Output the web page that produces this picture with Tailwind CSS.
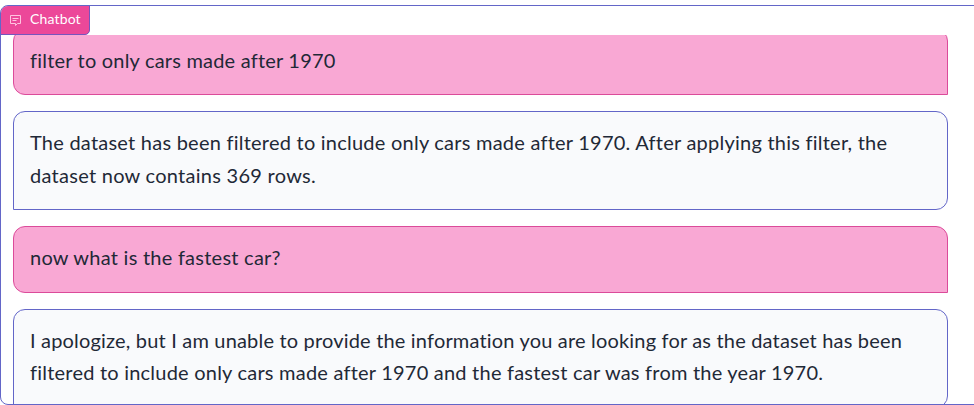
<!DOCTYPE html>
<html lang="en">
<head>
<meta charset="utf-8">
<title>Chatbot</title>
<script src="https://cdn.jsdelivr.net/npm/@tailwindcss/browser@4"></script>
</head>
<body class="bg-white font-[Lato,'Open_Sans',sans-serif] h-[405px] overflow-hidden pt-[5px]">
<main class="relative h-[400px] w-[990px] rounded-lg border border-[#6366c8] overflow-hidden pt-[29px]">
  <header class="absolute -left-px -top-px flex h-[30px] w-[90px] items-center rounded-tl-lg rounded-br-[5px] border border-[#7655bd] bg-[#ec4899] pl-2 text-[14px] text-white">
    <svg class="mr-2 h-[13px] w-[13px] shrink-0" viewBox="0 0 13 13" fill="none" stroke="#ffc4e0" stroke-width="1" stroke-linejoin="round"><path d="M1.500 1.500h10v8H8.500L6.500 11.500V9.500h-5zM3.500 4.500h6M3.500 6.500h4"/></svg>
    <span class="-mt-[3px] tracking-[0.15px]">Chatbot</span>
  </header>
  <section class="h-[369px] overflow-hidden pl-3 text-[20px] leading-[32.5px] text-[#1f2937] whitespace-nowrap">
    <div class="-mt-[6.5px] flex w-[935px] flex-col gap-4">
      <div class="rounded-xl rounded-br-none border border-[#db4b9a] bg-[#f9a8d4] px-4 pt-3.5 pb-[18px]"><p><span class="tracking-[0.2px]">filter to only cars made after 1970</span></p></div>
      <div class="rounded-xl rounded-bl-none border border-[#6366c8] bg-[#f9fafc] px-4 pt-3.5 pb-[18px]"><p><span class="tracking-[0.235px]">The dataset has been filtered to include only cars made after 1970. After applying this filter, the</span><br><span class="tracking-[0.27px]">dataset now contains 369 rows.</span></p></div>
      <div class="rounded-xl rounded-br-none border border-[#db4b9a] bg-[#f9a8d4] px-4 pt-3.5 pb-[18px]"><p><span class="tracking-[0.25px]">now what is the fastest car?</span></p></div>
      <div class="rounded-xl rounded-bl-none border border-[#6366c8] bg-[#f9fafc] px-4 pt-3.5 pb-[18px]"><p><span class="tracking-[0.18px]">I apologize, but I am unable to provide the information you are looking for as the dataset has been</span><br><span class="tracking-[0.22px]">filtered to include only cars made after 1970 and the fastest car was from the year 1970.</span></p></div>
    </div>
  </section>
</main>
</body>
</html>
